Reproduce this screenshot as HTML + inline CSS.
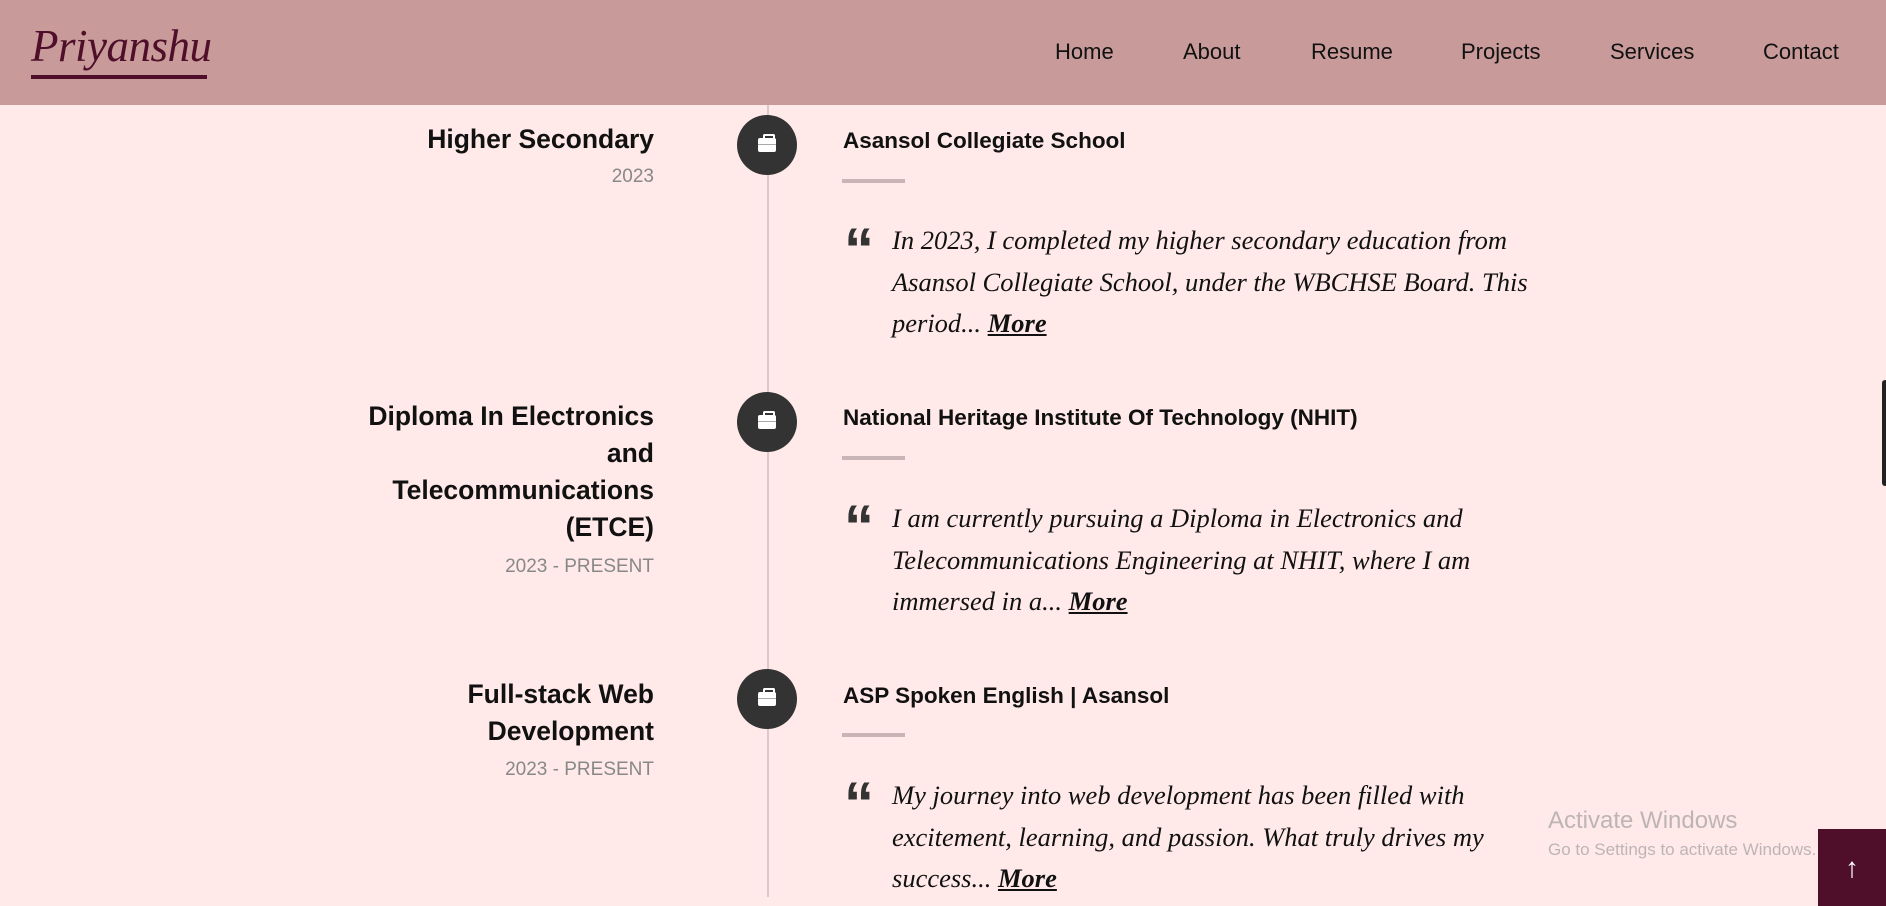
<!DOCTYPE html>
<html><head><meta charset="utf-8"><style>
*{margin:0;padding:0;box-sizing:border-box}
body{width:1886px;height:906px;overflow:hidden;background:#ffe9e9;font-family:"Liberation Sans",sans-serif;position:relative}
.hdr{position:absolute;left:0;top:0;width:1886px;height:105px;background:#c89a99}
.logo{position:absolute;left:31px;top:20px;font-family:"Liberation Serif",serif;font-style:italic;font-size:45px;color:#4f0f2a;letter-spacing:-0.5px}
.ul{position:absolute;left:31px;top:75px;width:176px;height:4px;background:#4f0f2a}
.nav a{position:absolute;top:39px;font-size:22px;color:#111;text-decoration:none}
.line{position:absolute;left:767px;top:105px;width:2px;height:792px;background:#dcc8cc}
.circ{position:absolute;left:737px;width:60px;height:60px;border-radius:50%;background:#333}
.circ i{position:absolute;left:21px;top:23px;width:18px;height:14px;background:#fff;border-radius:2px}
.circ i:before{content:"";position:absolute;left:5px;top:-4px;width:8px;height:5px;border:2px solid #fff;border-bottom:none;border-radius:2px 2px 0 0}
.circ i:after{content:"";position:absolute;left:0;top:6px;width:18px;height:1px;background:#aaa}
.tt{position:absolute;right:1232px;text-align:right;font-size:26.5px;font-weight:bold;color:#111;line-height:37px;white-space:nowrap}
.yr{position:absolute;right:1232px;text-align:right;font-size:19px;color:#888;white-space:nowrap}
.hd{position:absolute;left:843px;font-size:22.5px;font-weight:bold;color:#111}
.bar{position:absolute;left:842px;width:63px;height:4px;background:#c9b5b5}
.q{position:absolute;left:844px;font-family:"Liberation Sans",sans-serif;font-weight:bold;font-size:60px;color:#333;line-height:1}
.p{position:absolute;left:892px;width:640px;font-family:"Liberation Serif",serif;font-style:italic;font-size:26.5px;line-height:41.5px;color:#111}
.p b{text-decoration:underline}
.aw{position:absolute;left:1548px;top:807px;color:#bdb5b5;font-size:24px}
.aw2{position:absolute;left:1548px;top:840px;color:#bdb5b5;font-size:17px}
.top{position:absolute;left:1818px;top:829px;width:68px;height:77px;background:#4f0f2a;color:#fff;font-size:28px;text-align:center;line-height:77px;font-weight:bold}
.sb{position:absolute;left:1882px;top:380px;width:6px;height:106px;background:#222;border-radius:4px}
</style></head><body>
<div class="hdr"><div class="logo">Priyanshu</div><div class="ul"></div>
<div class="nav"><a style="left:1055px">Home</a><a style="left:1183px">About</a><a style="left:1311px">Resume</a><a style="left:1461px">Projects</a><a style="left:1610px">Services</a><a style="left:1763px">Contact</a></div></div>
<div class="line"></div>

<div class="circ" style="top:115px"><i></i></div>
<div class="tt" style="top:121px">Higher Secondary</div>
<div class="yr" style="top:166px">2023</div>
<div class="hd" style="top:128px">Asansol Collegiate School</div>
<div class="bar" style="top:179px"></div>
<div class="q" style="top:220px">“</div>
<div class="p" style="top:220px">In 2023, I completed my higher secondary education from Asansol Collegiate School, under the WBCHSE Board. This period... <b>More</b></div>

<div class="circ" style="top:392px"><i></i></div>
<div class="tt" style="top:398px">Diploma In Electronics<br>and<br>Telecommunications<br>(ETCE)</div>
<div class="yr" style="top:556px">2023 - PRESENT</div>
<div class="hd" style="top:405px">National Heritage Institute Of Technology (NHIT)</div>
<div class="bar" style="top:456px"></div>
<div class="q" style="top:497px">“</div>
<div class="p" style="top:498px">I am currently pursuing a Diploma in Electronics and Telecommunications Engineering at NHIT, where I am immersed in a... <b>More</b></div>

<div class="circ" style="top:669px"><i></i></div>
<div class="tt" style="top:676px">Full-stack Web<br>Development</div>
<div class="yr" style="top:759px">2023 - PRESENT</div>
<div class="hd" style="top:683px">ASP Spoken English | Asansol</div>
<div class="bar" style="top:733px"></div>
<div class="q" style="top:774px">“</div>
<div class="p" style="top:775px">My journey into web development has been filled with excitement, learning, and passion. What truly drives my success... <b>More</b></div>

<div class="aw">Activate Windows</div>
<div class="aw2">Go to Settings to activate Windows.</div>
<div class="top">↑</div>
<div class="sb"></div>
</body></html>
